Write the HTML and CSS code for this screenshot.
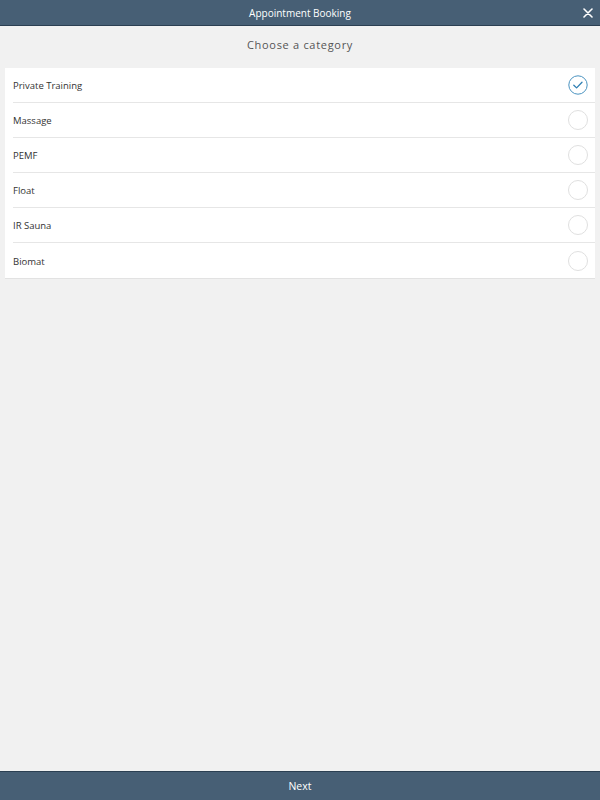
FILE: index.html
```html
<!DOCTYPE html>
<html>
<head>
<meta charset="utf-8">
<link rel="stylesheet" href="styles.css">
</head>
<body>
<div class="app">
  <header class="topbar">
    <span class="title">Appointment Booking</span>
    <span class="close">
      <svg width="10" height="10" viewBox="0 0 10 10"><path d="M1 1L9 9M9 1L1 9" stroke="#fff" stroke-width="1.6" stroke-linecap="round"/></svg>
    </span>
  </header>
  <main class="content">
    <h1 class="heading">Choose a category</h1>
    <ul class="list">
      <li class="row"><span class="label">Private Training</span>
        <span class="check on"><svg width="20" height="20" viewBox="0 0 20 20"><circle cx="10" cy="10" r="9.2" fill="none" stroke="#4a93c0" stroke-width="1"/><path d="M5.8 10.2L8.6 12.9L14 7.3" fill="none" stroke="#2f7fb3" stroke-width="1.3" stroke-linecap="round" stroke-linejoin="round"/></svg></span></li>
      <li class="row"><span class="label">Massage</span><span class="check"></span></li>
      <li class="row"><span class="label">PEMF</span><span class="check"></span></li>
      <li class="row"><span class="label">Float</span><span class="check"></span></li>
      <li class="row"><span class="label">IR Sauna</span><span class="check"></span></li>
      <li class="row"><span class="label">Biomat</span><span class="check"></span></li>
    </ul>
  </main>
  <footer class="bottombar">Next</footer>
</div>
</body>
</html>
```
FILE: styles.css
```css
* { box-sizing: border-box; }
html, body { margin: 0; padding: 0; }
body {
  font-family: "Open Sans", "Liberation Sans", sans-serif;
  background: #f1f1f1;
}
.app {
  width: 600px;
  height: 800px;
  display: flex;
  flex-direction: column;
}
.topbar {
  height: 26px;
  flex: none;
  background: #475f75;
  border-bottom: 1px solid #2b3f52;
  display: flex;
  align-items: center;
  justify-content: center;
  position: relative;
  color: #fff;
  font-size: 10px;
}
.title { line-height: 1; }
.close {
  position: absolute;
  right: 7px;
  top: 8px;
  display: flex;
}
.content {
  flex: 1;
  padding: 0 5px;
}
.heading {
  margin: 0;
  padding-top: 11px;
  height: 42px;
  text-align: center;
  font-size: 11px;
  font-weight: 400;
  letter-spacing: 0.7px;
  color: #555;
}
.list {
  list-style: none;
  margin: 0;
  padding: 0 0 0 8px;
  background: #fff;
  border-bottom: 1px solid #e2e2e2;
}
.row {
  height: 35px;
  display: flex;
  align-items: center;
  justify-content: space-between;
  padding-right: 7px;
  border-bottom: 1px solid #e6e6e6;
  font-size: 9.5px;
  color: #333;
}
.row:last-child { border-bottom: none; padding-top: 1px; }
.check {
  width: 20px;
  height: 20px;
  border: 1px solid #e0e0e0;
  border-radius: 50%;
  display: flex;
}
.check.on { border: none; }
.bottombar {
  height: 29px;
  flex: none;
  background: #475f75;
  border-top: 1px solid #2b3f52;
  color: #fff;
  font-size: 10.5px;
  padding-bottom: 0;
  display: flex;
  align-items: center;
  justify-content: center;
}
```
